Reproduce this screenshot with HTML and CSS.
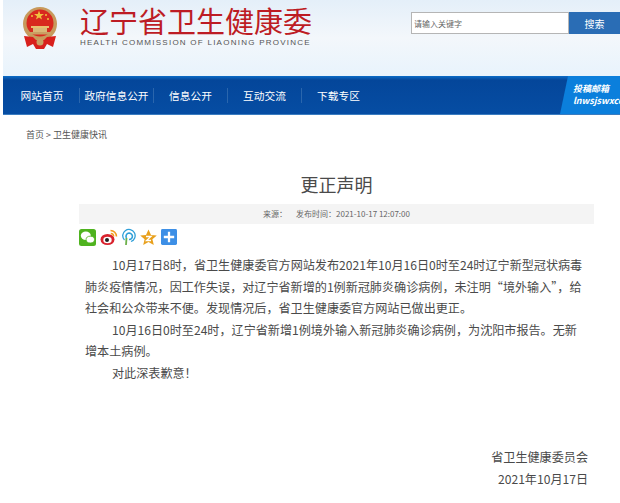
FILE: index.html
```html
<!DOCTYPE html>
<html lang="zh-CN">
<head>
    <meta charset="UTF-8">
    <meta name="viewport" content="width=device-width, initial-scale=1.0">
    <title>更正声明</title>
    <link rel="stylesheet" href="styles.css">
</head>
<body>
    <header class="top">
        <div class="logo">
            <svg class="emblem" viewBox="0 0 40 42" width="40" height="42">
                <!-- wheat ring -->
                <circle cx="20" cy="17" r="17" fill="#c79a5c"/>
                <circle cx="20" cy="16" r="13.5" fill="#d8281f"/>
                <!-- stars -->
                <polygon points="19,3.5 20.2,7 24,7 21,9.2 22,12.6 19,10.6 16,12.6 17,9.2 14,7 17.8,7" fill="#f0c040"/>
                <circle cx="12" cy="9" r="1" fill="#f0c040"/>
                <circle cx="26" cy="8" r="1" fill="#f0c040"/>
                <circle cx="28" cy="12" r="1" fill="#f0c040"/>
                <!-- gate -->
                <rect x="11" y="19" width="18" height="2" fill="#e8c070"/>
                <rect x="13" y="21" width="14" height="4" fill="#d9b878"/>
                <rect x="9" y="25" width="22" height="2.5" fill="#c9a063"/>
                <!-- ribbon -->
                <path d="M4 29 L13 30 L16 33 L24 33 L27 30 L36 29 L33 40 L27 37 L24 42 L16 42 L13 37 L7 40 Z" fill="#d8201c"/>
                <circle cx="20" cy="35" r="3.5" fill="#c9a063"/>
            </svg>
            <div class="logo-text">
                <div class="logo-cn">辽宁省卫生健康委</div>
                <div class="logo-en">HEALTH COMMISSION OF LIAONING PROVINCE</div>
            </div>
        </div>
        <form class="search">
            <input type="text" placeholder="请输入关键字">
            <button type="button">搜索</button>
        </form>
    </header>

    <nav class="nav">
        <a href="#">网站首页</a>
        <a href="#">政府信息公开</a>
        <a href="#">信息公开</a>
        <a href="#">互动交流</a>
        <a href="#">下载专区</a>
        <div class="mailbox">
            <b>投稿邮箱</b>
            <i>lnwsjswxcc@163.com</i>
        </div>
    </nav>

    <div class="crumbs"><a href="#">首页</a><span class="arrow">&gt;</span><a href="#">卫生健康快讯</a></div>

    <main class="article">
        <h1>更正声明</h1>
        <div class="meta"><span>来源：</span><span>发布时间：2021-10-17 12:07:00</span></div>
        <div class="share">
            <svg viewBox="0 0 17 17" width="17" height="17">
                <rect width="17" height="17" rx="2.5" fill="#4fb31f"/>
                <ellipse cx="6.8" cy="6.8" rx="5" ry="4.2" fill="#fff"/>
                <ellipse cx="11.3" cy="10.6" rx="4.2" ry="3.4" fill="#fff" stroke="#4fb31f" stroke-width=".8"/>
            </svg>
            <svg viewBox="0 0 18 18" width="18" height="18">
                <ellipse cx="7.5" cy="11.5" rx="7" ry="5.5" fill="#d9232e"/>
                <ellipse cx="7.5" cy="12" rx="4.2" ry="3.2" fill="#fff"/>
                <circle cx="7" cy="12" r="2" fill="#222"/>
                <path d="M10.5 2.5 A6 6 0 0 1 16.5 8.5" fill="none" stroke="#f29b1d" stroke-width="1.6"/>
                <path d="M10.8 5.5 A3 3 0 0 1 13.7 8.5" fill="none" stroke="#f29b1d" stroke-width="1.4"/>
            </svg>
            <svg viewBox="0 0 14 18" width="14" height="18">
                <path d="M4.5 10 A3.2 3.2 0 1 1 7 11.5" fill="none" stroke="#2f9fd8" stroke-width="1.6"/>
                <path d="M2.5 12 A6.2 6.2 0 1 1 9 13.5" fill="none" stroke="#2f9fd8" stroke-width="1.3"/>
                <path d="M4.5 10 L4 17" stroke="#6cb04a" stroke-width="1.8"/>
            </svg>
            <svg viewBox="0 0 17 17" width="17" height="17">
                <polygon points="8.5,0.5 11,6 16.8,6.4 12.4,10.2 13.8,16 8.5,13 3.2,16 4.6,10.2 0.2,6.4 6,6" fill="#e8a01c"/>
                <path d="M6 7.5 H11 L6.5 11.5 H11" fill="none" stroke="#fff" stroke-width="1.3"/>
            </svg>
            <svg viewBox="0 0 17 17" width="16" height="16">
                <rect width="17" height="17" rx="1.5" fill="#3d8fe6"/>
                <path d="M8.5 3 V14 M3 8.5 H14" stroke="#fff" stroke-width="2.4"/>
            </svg>
        </div>
        <div class="content">
            <p>10月17日8时，省卫生健康委官方网站发布2021年10月16日0时至24时辽宁新型冠状病毒肺炎疫情情况，因工作失误，对辽宁省新增的1例新冠肺炎确诊病例，未注明“境外输入”，给社会和公众带来不便。发现情况后，省卫生健康委官方网站已做出更正。</p>
            <p>10月16日0时至24时，辽宁省新增1例境外输入新冠肺炎确诊病例，为沈阳市报告。无新增本土病例。</p>
            <p>对此深表歉意！</p>
        </div>
        <div class="sign">
            <div>省卫生健康委员会</div>
            <div>2021年10月17日</div>
        </div>
    </main>
</body>
</html>
```
FILE: styles.css
```css
* {
    margin: 0;
    padding: 0;
    box-sizing: border-box;
}

html, body {
    height: 503px;
    overflow: hidden;
}

body {
    font-family: "Noto Sans CJK SC", "Liberation Sans", sans-serif;
    background: #fff;
    color: #4a4a4a;
    padding-left: 3px;
}

a {
    color: inherit;
    text-decoration: none;
}

.top {
    height: 76px;
    display: flex;
    justify-content: space-between;
    padding: 7px 0 0 17px;
    background: linear-gradient(180deg, #e4eff9 0%, #f3f7fb 50%, #e8f3fc 100%);
}

.logo {
    display: flex;
    gap: 20px;
}

.logo-text {
    margin-top: -1px;
}

.logo-cn {
    font-size: 29px;
    line-height: 29px;
    color: #bd1c24;
    white-space: nowrap;
}

.logo-en {
    font-family: "Liberation Sans", sans-serif;
    font-size: 8px;
    line-height: 10px;
    letter-spacing: 1.25px;
    color: #555;
    margin-top: 3px;
    white-space: nowrap;
}

.search {
    display: flex;
    margin-top: 5px;
}

.search input {
    width: 158px;
    height: 22px;
    border: 1px solid #b5b5b5;
    background: #fff;
    padding-left: 2px;
    font-family: inherit;
    font-size: 8px;
}

.search input::placeholder {
    color: #666;
}

.search button {
    width: 51px;
    height: 22px;
    border: none;
    background: #2a6db5;
    color: #fff;
    font-family: inherit;
    font-size: 10px;
}

.nav {
    height: 39px;
    display: flex;
    align-items: center;
    padding-left: 2px;
    background: linear-gradient(180deg, #0a6cc8 0, #04469a 4px, #064da3 100%);
    border-bottom: 1px solid #3a7cc0;
    color: #fff;
    font-size: 10.7px;
    position: relative;
}

.nav a {
    width: 74px;
    height: 15px;
    line-height: 15px;
    text-align: center;
    white-space: nowrap;
    border-left: 1px solid #2a66ad;
}

.nav a:first-child {
    border-left: none;
}

.mailbox {
    position: absolute;
    top: 0;
    right: 0;
    width: 60px;
    height: 100%;
    padding: 7px 0 0 13px;
    background: #0b7fdc;
    clip-path: polygon(8px 0, 100% 0, 100% 100%, 0 100%);
    font-size: 9px;
    line-height: 12px;
    white-space: nowrap;
    overflow: hidden;
}

.mailbox b, .mailbox i {
    display: block;
    font-style: italic;
    font-weight: bold;
}

.crumbs {
    font-size: 9px;
    line-height: 12px;
    color: #555;
    margin: 14px 0 0 23px;
}

.crumbs .arrow {
    margin: 0 2px;
}

.article {
    width: 515px;
    margin: 0 0 0 76px;
}

h1 {
    font-size: 18px;
    font-weight: normal;
    line-height: 24px;
    text-align: center;
    margin-top: 31px;
}

.meta {
    height: 20px;
    margin-top: 8px;
    display: flex;
    justify-content: center;
    gap: 9px;
    background: #f4f4f4;
    color: #666;
    font-size: 8px;
    line-height: 20px;
}

.share {
    display: flex;
    align-items: center;
    gap: 4px;
    height: 18px;
    margin-top: 4px;
}

.content {
    margin-top: 8px;
    padding: 0 6px;
    font-size: 12.1px;
    line-height: 21.5px;
}

.content p {
    text-indent: 27px;
}

.sign {
    margin-top: 63px;
    padding-right: 6px;
    font-size: 12.1px;
    line-height: 22px;
    text-align: right;
}
```
